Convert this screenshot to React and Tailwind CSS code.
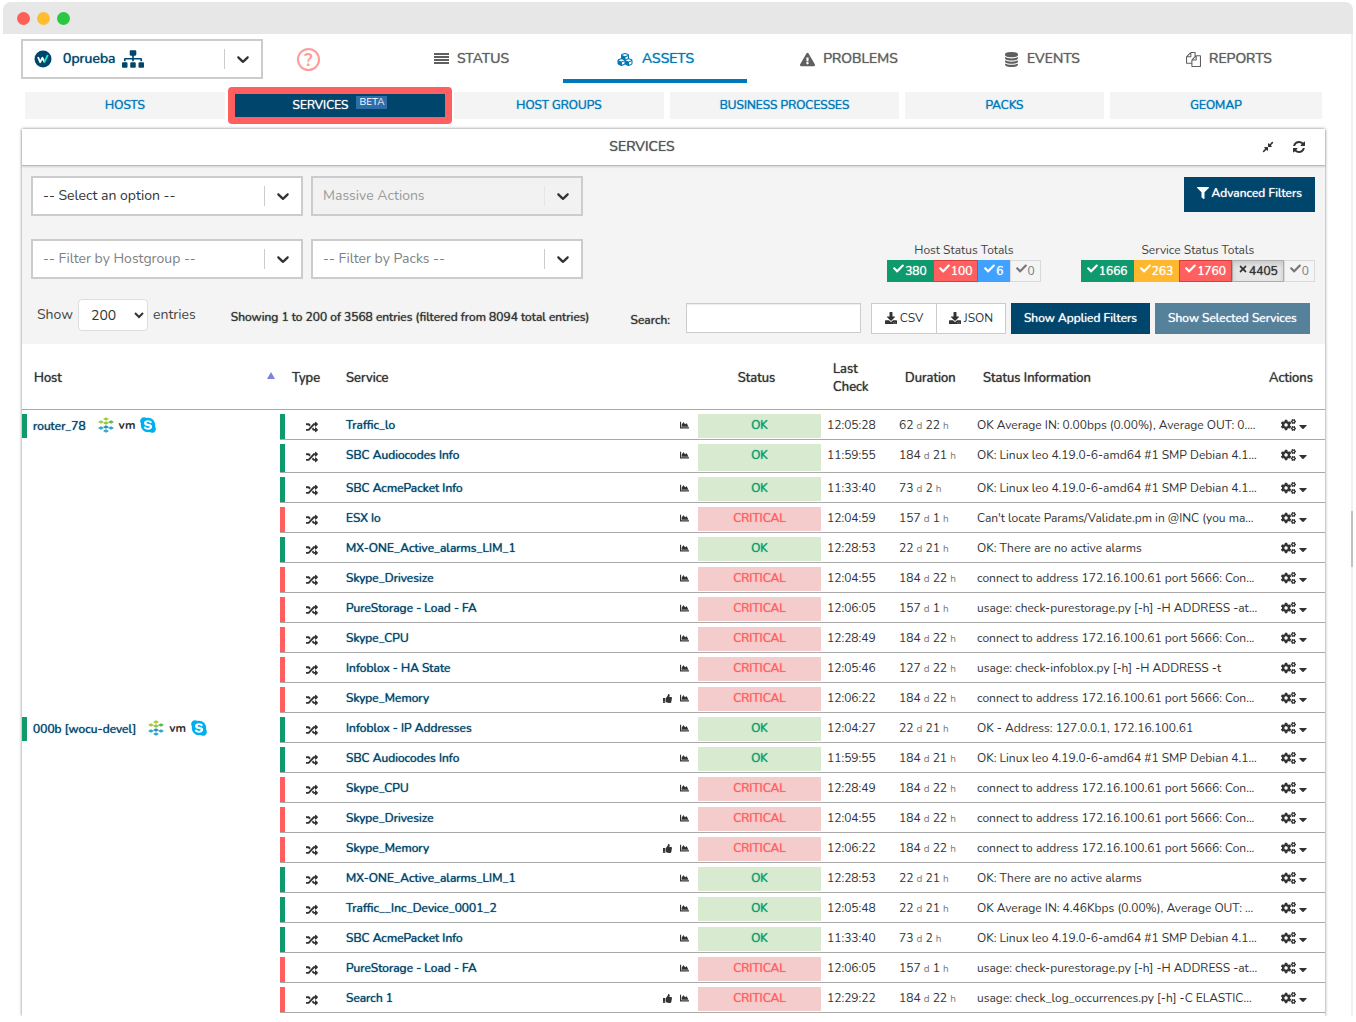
import clsx from 'clsx';
import {
  FaCaretDown,
  FaChartArea,
  FaCheck,
  FaCogs,
  FaCompressAlt,
  FaCubes,
  FaDownload,
  FaExclamationTriangle,
  FaFilter,
  FaRandom,
  FaSitemap,
  FaSkype,
  FaThumbsUp,
  FaTimes,
} from 'react-icons/fa';

// heavier stroke while keeping the regular letter widths
const STRONG = '[text-shadow:0_0_1px_currentColor]';

const FILES_PATH =
  'M1696 384q40 0 68 28t28 68v1216q0 40-28 68t-68 28h-960q-40 0-68-28t-28-68v-288h-544q-40 0-68-28t-28-68v-672q0-40 20-88t48-76l408-408q28-28 76-48t88-20h416q40 0 68 28t28 68v328q68-40 128-40h416zm-544 213l-299 299h299v-299zm-640-384l-299 299h299v-299zm196 647l316-316v-416h-384v416q0 40-28 68t-68 28h-416v640h512v-256q0-40 20-88t48-76zm956 804v-1152h-384v416q0 40-28 68t-68 28h-416v640h896z';

const DATABASE_PATH =
  'M896 768q237 0 443-43t325-127v170q0 69-103 128t-280 93.5-385 34.5-385-34.5-280-93.5-103-128v-170q119 84 325 127t443 43zm0 768q237 0 443-43t325-127v170q0 69-103 128t-280 93.5-385 34.5-385-34.5-280-93.5-103-128v-170q119 84 325 127t443 43zm0-384q237 0 443-43t325-127v170q0 69-103 128t-280 93.5-385 34.5-385-34.5-280-93.5-103-128v-170q119 84 325 127t443 43zm0-1152q208 0 385 34.5t280 93.5 103 128v128q0 69-103 128t-280 93.5-385 34.5-385-34.5-280-93.5-103-128v-128q0-69 103-128t280-93.5 385-34.5z';

const REFRESH_PATH =
  'M1639 1056q0 5-1 7-64 268-268 434.500t-478 166.500q-146 0-282.500-55t-243.500-157l-129 129q-19 19-45 19t-45-19-19-45v-448q0-26 19-45t45-19h448q26 0 45 19t19 45-19 45l-137 137q71 66 161 102t187 36q134 0 250-65t186-179q11-17 53-117 8-23 30-23h192q13 0 22.500 9.500t9.500 22.500zm25-800v448q0 26-19 45t-45 19h-448q-26 0-45-19t-19-45 19-45l138-138q-148-137-349-137-134 0-250 65t-186 179q-11 17-53 117-8 23-30 23h-199q-13 0-22.500-9.500t-9.500-22.500v-7q65-268 270-434.500t480-166.500q146 0 284 55.500t245 156.500l130-129q19-19 45-19t45 19 19 45z';

function PathIcon({ d, className }) {
  return (
    <svg viewBox="0 0 1792 1792" fill="currentColor" className={className} aria-hidden="true">
      <path d={d} />
    </svg>
  );
}

const FilesIcon = ({ className }) => <PathIcon d={FILES_PATH} className={className} />;
const DatabaseIcon = ({ className }) => <PathIcon d={DATABASE_PATH} className={className} />;

function BarsIcon({ className }) {
  return (
    <svg viewBox="0 0 15 15" fill="currentColor" className={className} aria-hidden="true">
      <path d="M0 1h15v2H0zM0 4h15v2H0zM0 7h15v2H0zM0 10h15v2H0z" />
    </svg>
  );
}

const NAV_ITEMS = [
  { label: 'STATUS', Icon: BarsIcon },
  { label: 'ASSETS', Icon: FaCubes, active: true },
  { label: 'PROBLEMS', Icon: FaExclamationTriangle },
  { label: 'EVENTS', Icon: DatabaseIcon },
  { label: 'REPORTS', Icon: FilesIcon },
];

const TABS = ['HOSTS', 'SERVICES', 'HOST GROUPS', 'BUSINESS PROCESSES', 'PACKS', 'GEOMAP'];

const CONNECT = 'connect to address 172.16.100.61 port 5666: Con...';
const LINUX = 'OK: Linux leo 4.19.0-6-amd64 #1 SMP Debian 4.1...';
const PURE = 'usage: check-purestorage.py [-h] -H ADDRESS -at...';

// name, ok, last check, days, hours, info, acknowledged
const HOSTS = [
  {
    name: 'router_78',
    services: [
      ['Traffic_lo', true, '12:05:28', 62, 22, 'OK Average IN: 0.00bps (0.00%), Average OUT: 0....'],
      ['SBC Audiocodes Info', true, '11:59:55', 184, 21, LINUX],
      ['SBC AcmePacket Info', true, '11:33:40', 73, 2, LINUX],
      ['ESX Io', false, '12:04:59', 157, 1, "Can't locate Params/Validate.pm in @INC (you ma..."],
      ['MX-ONE_Active_alarms_LIM_1', true, '12:28:53', 22, 21, 'OK: There are no active alarms'],
      ['Skype_Drivesize', false, '12:04:55', 184, 22, CONNECT],
      ['PureStorage - Load - FA', false, '12:06:05', 157, 1, PURE],
      ['Skype_CPU', false, '12:28:49', 184, 22, CONNECT],
      ['Infoblox - HA State', false, '12:05:46', 127, 22, 'usage: check-infoblox.py [-h] -H ADDRESS -t'],
      ['Skype_Memory', false, '12:06:22', 184, 22, CONNECT, true],
    ],
  },
  {
    name: '000b [wocu-devel]',
    services: [
      ['Infoblox - IP Addresses', true, '12:04:27', 22, 21, 'OK - Address: 127.0.0.1, 172.16.100.61'],
      ['SBC Audiocodes Info', true, '11:59:55', 184, 21, LINUX],
      ['Skype_CPU', false, '12:28:49', 184, 22, CONNECT],
      ['Skype_Drivesize', false, '12:04:55', 184, 22, CONNECT],
      ['Skype_Memory', false, '12:06:22', 184, 22, CONNECT, true],
      ['MX-ONE_Active_alarms_LIM_1', true, '12:28:53', 22, 21, 'OK: There are no active alarms'],
      ['Traffic__Inc_Device_0001_2', true, '12:05:48', 22, 21, 'OK Average IN: 4.46Kbps (0.00%), Average OUT: ...'],
      ['SBC AcmePacket Info', true, '11:33:40', 73, 2, LINUX],
      ['PureStorage - Load - FA', false, '12:06:05', 157, 1, PURE],
      ['Search 1', false, '12:29:22', 184, 22, 'usage: check_log_occurrences.py [-h] -C ELASTIC...', true],
    ],
  },
];

const HOST_TOTALS = [
  { count: 380, className: 'border-[#0e9a6c] bg-[#0e9a6c] text-white' },
  { count: 100, className: 'border-[#d43f3a] bg-[#ff5f5f] text-white' },
  { count: 6, className: 'border-[#3fa2ff] bg-[#3fa2ff] text-white' },
  { count: 0, className: 'border-[#d9d9d9] bg-[#f4f4f4] text-[#777]' },
];

const SERVICE_TOTALS = [
  { count: 1666, className: 'border-[#0e9a6c] bg-[#0e9a6c] text-white' },
  { count: 263, className: 'border-[#ffb82e] bg-[#ffb82e] text-white' },
  { count: 1760, className: 'border-[#d43f3a] bg-[#ff5f5f] text-white' },
  { count: 4405, off: true, className: 'border-[#adadad] bg-[#e6e6e6] text-[#333] shadow-[inset_0_3px_5px_rgba(0,0,0,0.125)]' },
  { count: 0, className: 'border-[#d9d9d9] bg-[#f4f4f4] text-[#777]' },
];

function Chevron() {
  return (
    <svg viewBox="0 0 20 20" className="h-5 w-5" fill="#333" aria-hidden="true">
      <path d="M4.516 7.548c0.436-0.446 1.043-0.481 1.576 0l3.908 3.747 3.908-3.747c0.533-0.481 1.141-0.446 1.574 0 0.436 0.445 0.408 1.197 0 1.615-0.406 0.418-4.695 4.502-4.695 4.502-0.217 0.223-0.502 0.335-0.787 0.335s-0.57-0.112-0.789-0.335c0 0-4.287-4.084-4.695-4.502s-0.436-1.17 0-1.615z" />
    </svg>
  );
}

function Picker({ label, disabled, muted, className, children }) {
  return (
    <button
      type="button"
      aria-haspopup="listbox"
      disabled={disabled}
      className={clsx(
        'flex h-10 items-center border-2 border-[#ccc] pl-[10px] text-left text-sm',
        disabled ? 'bg-[#f2f2f2] text-[#999]' : 'bg-white',
        muted ? 'text-[#808080]' : !disabled && 'text-[#333]',
        className
      )}
    >
      <span className="flex flex-1 items-center">{children ?? label}</span>
      <span className={clsx('h-5 w-px', disabled ? 'bg-[#e6e6e6]' : 'bg-[#ccc]')} />
      <span className="px-2">
        <Chevron />
      </span>
    </button>
  );
}

function WocuLogo() {
  return (
    <svg viewBox="0 0 18 18" className="ml-px h-[18px] w-[18px]" fill="none" aria-hidden="true">
      <circle cx="9" cy="9" r="8.500" fill="#00456b" />
      <path d="M4 7l2.200 5.200 2.200-4.500 2 4.500" stroke="#fff" strokeWidth="1.800" strokeLinejoin="round" />
      <path d="M10.200 12.500L13.800 5" stroke="#2de0c8" strokeWidth="1.800" />
    </svg>
  );
}

function DiamondsLogo() {
  const tiles = [
    [8, 2, '#a6ce39'],
    [3, 5, '#a6ce39'],
    [13, 5, '#62bb46'],
    [8, 6, '#8fc73e'],
    [8, 10, '#2b8fb8'],
    [3, 11, '#2fa8cf'],
    [13, 11, '#2fa8cf'],
    [8, 14, '#2fa8cf'],
  ];
  return (
    <svg viewBox="0 0 16 16" className="h-4 w-4" aria-hidden="true">
      {tiles.map(([x, y, fill]) => (
        <path key={`${x}-${y}`} d={`M${x} ${y - 1.8}l3 1.800-3 1.800-3-1.800z`} fill={fill} />
      ))}
    </svg>
  );
}

function Totals({ title, items }) {
  return (
    <div className="text-center">
      <div className="text-xs leading-5 text-[#444]">{title}</div>
      <div className="flex">
        {items.map(({ count, off, className }) => (
          <button
            key={count}
            type="button"
            className={clsx('flex h-[22px] items-start gap-px border px-[5px] text-xs leading-5', count > 0 && STRONG, className)}
          >
            {off ? <FaTimes className="mt-[3px] h-[10px] w-[10px]" /> : <FaCheck className="mt-[2px] h-[11px] w-[11px]" />}
            {count}
          </button>
        ))}
      </div>
    </div>
  );
}

function ServiceRow({ service, host, index }) {
  const [name, ok, lastCheck, days, hours, info, ack] = service;
  return (
    <tr className={clsx('align-top', index === 1 && host.name === 'router_78' ? 'h-[33px]' : 'h-[30px]')}>
      {index === 0 && (
        <td rowSpan={host.services.length} className="pt-1">
          <div className="flex h-6 items-center border-l-[5px] border-[#0e9a6c] pl-[6px]">
            <a href="#host" className={clsx('text-[#00456b]', STRONG)}>{host.name}</a>
            <span className="ml-3 flex items-center gap-[5px] pb-[2px]">
              <DiamondsLogo />
              <span className="text-xs font-bold leading-4 text-[#333]">vm</span>
              <FaSkype className="h-[18px] w-4 text-[#00aff0]" aria-label="Skype" />
            </span>
          </div>
        </td>
      )}
      <td className="h-px border-b border-[#aaa] pt-1">
        <div className={clsx('flex h-full items-start border-l-[5px] pt-[7px] pl-[21px]', ok ? 'border-[#0e9a6c]' : 'border-[#ff5f5f]')}>
          <FaRandom className="h-3 w-3" aria-label="Active check" />
        </div>
      </td>
      <td className="border-b border-[#aaa] pt-1 pl-[11px]">
        <div className="flex h-[22px] items-center">
          <a href="#service" className={clsx('flex-1 text-[#00456b]', STRONG)}>{name}</a>
          <span className="flex items-center gap-2 pr-[9px]">
            {ack && <FaThumbsUp className="h-[9px] w-[9px]" aria-label="Acknowledged" />}
            <FaChartArea className="h-[10px] w-[9px]" aria-label="Graph" />
          </span>
        </div>
      </td>
      <td className="h-px border-b border-[#aaa] pt-1 pb-px">
        <div className={clsx('h-full pt-px text-center leading-5', STRONG, ok ? 'bg-[#d8ebd0] text-[#0e9a6c]' : 'bg-[#f5cccc] text-[#ff5f5f]')}>
          {ok ? 'OK' : 'CRITICAL'}
        </div>
      </td>
      <td className="border-b border-[#aaa] pt-1 pl-[6px] leading-[22px]">{lastCheck}</td>
      <td className="border-b border-[#aaa] pt-1 pl-[6px] leading-[22px]">
        {days} <span className="text-[10px] text-[#777]">d</span> {hours}{' '}
        <span className="text-[10px] text-[#777]">h</span>
      </td>
      <td className="truncate border-b border-[#aaa] pt-1 pl-[6px] leading-[22px]">{info}</td>
      <td className="border-b border-[#aaa] pt-1">
        <button type="button" aria-label="Actions" className="ml-[18px] flex h-[22px] items-center gap-[3px]">
          <FaCogs className="h-[14px] w-[15px]" />
          <FaCaretDown className="mt-[2px] h-[13px] w-2" />
        </button>
      </td>
    </tr>
  );
}

function ServicesTable() {
  return (
    <table className="w-full table-fixed border-separate border-spacing-0 bg-white text-xs text-[#333]">
      <colgroup>
        <col className="w-[258px]" />
        <col className="w-[55px]" />
        <col className="w-[363px]" />
        <col className="w-[123px]" />
        <col className="w-[72px]" />
        <col className="w-[78px]" />
        <col />
        <col className="w-[62px]" />
      </colgroup>
      <thead>
        <tr className={clsx('h-[66px] text-left text-[13px] leading-[18px] [&>th]:border-b [&>th]:border-[#aaa] [&>th]:pt-[2px] [&>th]:font-normal', STRONG)}>
          <th className="pl-3">
            <span className="flex items-center justify-between pr-[5px]">
              Host
              <span className="mb-1 border-x-4 border-b-[7px] border-x-transparent border-b-[#7d82dc]" />
            </span>
          </th>
          <th className="pl-3">Type</th>
          <th className="pl-[11px]">Service</th>
          <th className="pr-[6px] text-center">Status</th>
          <th className="pr-5 pl-3">Last Check</th>
          <th className="pl-3">Duration</th>
          <th className="pl-3">Status Information</th>
          <th className="pl-[6px]">Actions</th>
        </tr>
      </thead>
      <tbody>
        {HOSTS.map((host) =>
          host.services.map((service, index) => (
            <ServiceRow key={host.name + service[0]} service={service} host={host} index={index} />
          ))
        )}
      </tbody>
    </table>
  );
}

function Filters() {
  return (
    <div className="bg-[#f4f4f4] py-[10px] pr-[10px] pl-[9px]">
      <div className="flex items-start gap-2">
        <Picker label="-- Select an option --" className="w-[272px]" />
        <Picker label="Massive Actions" disabled className="w-[272px]" />
        <button
          type="button"
          className={clsx('mt-px ml-auto flex h-[35px] items-center gap-[3px] bg-[#00456b] px-[13px] pb-[3px] text-xs text-white', STRONG)}
        >
          <FaFilter className="h-3 w-3" />
          Advanced Filters
        </button>
      </div>
      <div className="mt-[23px] flex items-start gap-2">
        <Picker label="-- Filter by Hostgroup --" muted className="w-[272px]" />
        <Picker label="-- Filter by Packs --" muted className="w-[272px]" />
        <div className="mt-px ml-auto flex gap-10">
          <Totals title="Host Status Totals" items={HOST_TOTALS} />
          <Totals title="Service Status Totals" items={SERVICE_TOTALS} />
        </div>
      </div>
      <div className={clsx('mt-[17px] flex items-start pr-[5px] pl-[6px] text-xs', STRONG)}>
        <label className="flex items-center gap-[5px] text-sm text-[#444] [text-shadow:none]">
          Show
          <select defaultValue="200" className="h-8 w-[70px] rounded-sm border border-[#ddd] bg-white pl-2 text-[#333]">
            <option>200</option>
          </select>
          entries
        </label>
        <span className="ml-[35px] pt-[10px]">
          Showing 1 to 200 of 3568 entries (filtered from 8094 total entries)
        </span>
        <label htmlFor="search" className="ml-auto pt-[13px]">Search:</label>
        <input
          id="search"
          type="text"
          className="mt-1 ml-4 h-[30px] w-[175px] border border-[#ccc] bg-white px-2 shadow-[inset_0_1px_1px_rgba(0,0,0,0.075)]"
        />
        <div className="mt-1 ml-[10px] flex [text-shadow:none]">
          <button type="button" className="flex h-[31px] w-[66px] items-center justify-center gap-[3px] border border-[#ccc] bg-white pb-px">
            <FaDownload className="h-3 w-3" />
            CSV
          </button>
          <button type="button" className="-ml-px flex h-[31px] w-[70px] items-center justify-center gap-[3px] border border-[#ccc] bg-white pb-px">
            <FaDownload className="h-3 w-3" />
            JSON
          </button>
        </div>
        <button type="button" className={clsx('mt-1 ml-[5px] h-[31px] w-[139px] bg-[#00456b] pb-px text-white', STRONG)}>
          Show Applied Filters
        </button>
        <button type="button" className={clsx('mt-1 ml-[5px] h-[31px] w-[155px] bg-[#55819b] pb-px text-white', STRONG)}>
          Show Selected Services
        </button>
      </div>
    </div>
  );
}

export default function App() {
  return (
    <div className="relative mx-[3px] overflow-hidden bg-white pt-[2px] font-[Nunito,Lato,sans-serif] text-[#333]">
      <div className="flex h-8 items-center gap-[7px] rounded-t-lg bg-[#e7e7e7] pt-px pl-[14px]">
        <span className="h-[13px] w-[13px] rounded-full bg-[#ff5f57]" />
        <span className="h-[13px] w-[13px] rounded-full bg-[#ffbd2e]" />
        <span className="h-[13px] w-[13px] rounded-full bg-[#28c940]" />
      </div>

      <header className="flex items-start pt-[5px] pr-7 pl-[18px]">
        <Picker className="w-[242px]">
          <WocuLogo />
          <span className={clsx('mr-[7px] ml-[11px] text-[#00456b]', STRONG)}>0prueba</span>
          <FaSitemap className="h-[22px] w-[22px] text-[#00456b]" />
        </Picker>
        <button type="button" aria-label="Help" className="mt-[9px] ml-[34px] h-[23px] w-[23px] rounded-full border-2 border-[#ff9b9b] text-lg leading-[18px] font-bold text-[#ff9b9b]">
          ?
        </button>
        <nav className="ml-[60px] grid h-11 flex-1 grid-cols-[183fr_184fr_204fr_182fr_192fr]">
          {NAV_ITEMS.map(({ label, Icon, active }) => (
            <a
              key={label}
              href="#nav"
              className={clsx(
                'flex items-center justify-center gap-2 border-b-4 text-sm',
                STRONG,
                active ? 'border-[#0078b9] text-[#0078b9]' : 'border-transparent text-[#5f5f5f]'
              )}
            >
              <Icon className={clsx('h-[15px]', active ? 'w-[18px]' : 'w-[15px]')} />
              {label}
            </a>
          ))}
        </nav>
      </header>

      <nav className={clsx('mt-[9px] grid h-[27px] grid-cols-[200fr_217fr_210fr_229fr_199fr_212fr] gap-[6px] pr-[31px] pl-[22px] text-xs', STRONG)}>
        {TABS.map((tab) =>
          tab === 'SERVICES' ? (
            <a
              key={tab}
              href="#tab"
              aria-current="page"
              className={clsx(
                '-my-[5px] -mr-1 -ml-[3px] flex items-center justify-center gap-2 rounded border-[7px] border-[#ff5f5f] bg-[#00456b] pb-[2px] text-white',
                STRONG
              )}
            >
              {tab}
              <span className="mb-1 bg-[#2f6da8] px-[3px] text-[10px] leading-[13px] [text-shadow:none]">BETA</span>
            </a>
          ) : (
            <a key={tab} href="#tab" className={clsx('flex items-center justify-center bg-[#f4f4f4] pb-[2px] text-[#0078b9]', STRONG)}>
              {tab}
            </a>
          )
        )}
      </nav>

      <main className="mt-[10px] mr-7 ml-[19px] bg-white pb-[3px] shadow-[0_0_3px_rgba(0,0,0,0.5)]">
        <div className="relative flex h-[37px] items-center border-b border-[#bbb] pr-[19px] shadow-[0_1px_2px_rgba(0,0,0,0.15)]">
          <h1 className={clsx('flex-1 pb-px text-center text-sm text-[#555]', STRONG)}>SERVICES</h1>
          <button type="button" aria-label="Collapse" className="mr-[18px]">
            <FaCompressAlt className="h-3 w-3" />
          </button>
          <button type="button" aria-label="Refresh">
            <PathIcon d={REFRESH_PATH} className="h-[14px] w-[14px]" />
          </button>
        </div>
        <Filters />
        <ServicesTable />
      </main>

      {/* scrollbar */}
      <div className="absolute top-[34px] right-0 bottom-0 w-[2px] bg-[#f1f1f1]">
        <div className="mt-[477px] h-14 bg-[#c1c1c1]" />
      </div>
    </div>
  );
}
